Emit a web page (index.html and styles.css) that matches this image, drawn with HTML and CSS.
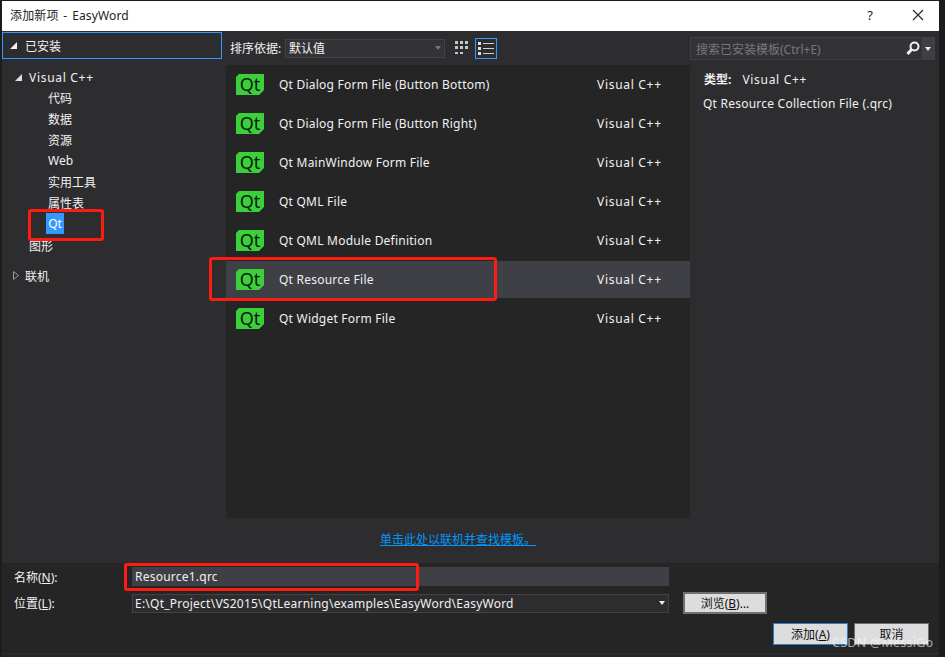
FILE: index.html
```html
<!DOCTYPE html>
<html lang="zh-CN">
<head>
    <meta charset="UTF-8">
    <title>添加新项 - EasyWord</title>
    <link rel="stylesheet" href="styles.css">
</head>
<body>

    <div class="dialog">
        <div class="titlebar">
            <span class="title">添加新项 - EasyWord</span>
            <span class="help">?</span>
            <svg class="close" width="12" height="12" viewBox="0 0 12 12"><path d="M1 1L11 11M11 1L1 11" stroke="#222" stroke-width="1.1" fill="none"/></svg>
        </div>

        <div class="main">
            <div class="sidebar">
                <div class="installed">
                    <svg class="arrow" width="7" height="7" viewBox="0 0 7 7"><polygon points="7,0 7,7 0,7" fill="#f1f1f1"/></svg>
                    <span>已安装</span>
                </div>
                <ul class="tree">
                    <li class="root">
                        <svg class="arrow" width="7" height="7" viewBox="0 0 7 7"><polygon points="7,0 7,7 0,7" fill="#e0e0e0"/></svg>
                        <span class="wide">Visual C++</span>
                    </li>
                    <li class="leaf">代码</li>
                    <li class="leaf">数据</li>
                    <li class="leaf">资源</li>
                    <li class="leaf">Web</li>
                    <li class="leaf">实用工具</li>
                    <li class="leaf">属性表</li>
                    <li class="leaf"><span class="picked">Qt</span></li>
                    <li class="branch">图形</li>
                    <li class="online">
                        <svg class="arrow" width="6" height="9" viewBox="0 0 6 9"><polygon points="0.5,0.5 5.5,4.5 0.5,8.5" fill="none" stroke="#9a9a9a"/></svg>
                        <span>联机</span>
                    </li>
                </ul>
            </div>

            <div class="center">
                <div class="toolbar">
                    <span class="sort-label">排序依据:</span>
                    <div class="sort-select">
                        <span>默认值</span>
                        <i class="caret dim"></i>
                    </div>
                    <svg class="view-grid" width="13" height="14" viewBox="0 0 13 14">
                        <path d="M0 0h3v3H0zM5 0h3v3H5zM10 0h3v3h-3zM0 5h3v3H0zM5 5h3v3H5zM10 5h3v3h-3zM0 11h3v2H0zM5 11h3v2H5z" fill="#c8c8c8"/>
                    </svg>
                    <div class="view-list">
                        <svg width="16" height="13" viewBox="0 0 16 13">
                            <path d="M0 0h3v3H0zM0 5h3v3H0zM0 10h3v3H0z" fill="#e0e0e0"/>
                            <path d="M5 1.5h11M5 6.5h11M5 11.5h11" stroke="#d0d0d0" fill="none"/>
                        </svg>
                    </div>
                </div>

                <div class="list">
                    <div class="row"><span class="qt">Qt</span><span class="name">Qt Dialog Form File (Button Bottom)</span><span class="lang">Visual C++</span></div>
                    <div class="row"><span class="qt">Qt</span><span class="name">Qt Dialog Form File (Button Right)</span><span class="lang">Visual C++</span></div>
                    <div class="row"><span class="qt">Qt</span><span class="name">Qt MainWindow Form File</span><span class="lang">Visual C++</span></div>
                    <div class="row"><span class="qt">Qt</span><span class="name">Qt QML File</span><span class="lang">Visual C++</span></div>
                    <div class="row"><span class="qt">Qt</span><span class="name">Qt QML Module Definition</span><span class="lang">Visual C++</span></div>
                    <div class="row selected"><span class="qt">Qt</span><span class="name">Qt Resource File</span><span class="lang">Visual C++</span></div>
                    <div class="row"><span class="qt">Qt</span><span class="name">Qt Widget Form File</span><span class="lang">Visual C++</span></div>
                </div>

                <div class="online-link"><a href="#">单击此处以联机并查找模板。</a></div>
            </div>

            <div class="details">
                <div class="search">
                    <span class="search-text">搜索已安装模板(Ctrl+E)</span>
                    <svg class="search-icon" width="14" height="15" viewBox="0 0 14 15">
                        <circle cx="8.5" cy="5.5" r="4" fill="none" stroke="#f1f1f1" stroke-width="2"/>
                        <path d="M5.5 8.5L1.5 13" stroke="#f1f1f1" stroke-width="3" fill="none"/>
                    </svg>
                    <div class="search-btn"><i class="caret"></i></div>
                </div>
                <div class="info-type"><b>类型:</b><span class="wide">Visual C++</span></div>
                <div class="info-desc">Qt Resource Collection File (.qrc)</div>
            </div>
        </div>

        <div class="footer">
            <div class="field name-field">
                <label>名称(<u>N</u>):</label>
                <div class="name-input">Resource1.qrc</div>
            </div>
            <div class="field path-field">
                <label>位置(<u>L</u>):</label>
                <div class="path-select">
                    <span>E:\Qt_Project\VS2015\QtLearning\examples\EasyWord\EasyWord</span>
                    <i class="caret"></i>
                </div>
                <button class="btn browse">浏览(<u>B</u>)...</button>
            </div>
            <div class="actions">
                <button class="btn primary">添加(<u>A</u>)</button>
                <button class="btn">取消</button>
            </div>
        </div>
    </div>

    <!-- 红框标注 -->
    <div class="mark mark-qt"></div>
    <div class="mark mark-row"></div>
    <div class="mark mark-name"></div>
    <div class="watermark">CSDN @MessiGo</div>

</body>
</html>
```

FILE: styles.css
```css
* {
    box-sizing: border-box;
}
html, body {
    height: 100%;
}
body {
    margin: 0;
    background-color: #1c1c1c;
    font-family: "Noto Sans", "Noto Sans CJK SC", sans-serif;
    font-size: 12px;
    color: #f1f1f1;
    overflow: hidden;
    position: relative;
}
.dialog {
    width: 937px;
    height: 656px;
    margin: 1px 0 0 2px;
    display: flex;
    flex-direction: column;
    background-color: #2d2d30;
}
.titlebar {
    height: 30px;
    flex: none;
    background-color: #fff;
    color: #222;
    display: flex;
    align-items: center;
    padding: 0 0 2px 8px;
}
.title {
    flex: 1;
    font-size: 12px;
    letter-spacing: 0.15px;
    word-spacing: 1.5px;
}
.help {
    margin-right: 39px;
    font-size: 13px;
}
.close {
    margin-right: 15px;
}
.main {
    flex: 1;
    min-height: 0;
    display: flex;
}
.sidebar {
    width: 224px;
    flex: none;
}
.installed {
    width: 220px;
    height: 27px;
    margin-top: 1px;
    border: 1px solid #3399ff;
    display: flex;
    align-items: center;
    padding-left: 7px;
    gap: 8px;
}
.tree {
    list-style: none;
    margin: 8px 0 0;
    padding: 0;
}
.tree li {
    height: 21px;
    display: flex;
    align-items: center;
}
.tree .root {
    height: 20px;
    padding-left: 13px;
    gap: 7px;
}
.leaf {
    padding-left: 46px;
}
.branch {
    margin-top: 1px;
    padding-left: 27px;
}
.tree .online {
    margin-top: 9px;
    padding-left: 11px;
    gap: 6px;
}
.picked {
    background-color: #3399ff;
    color: #fff;
    height: 21px;
    line-height: 21px;
    width: 18px;
    margin-left: -2px;
    text-align: center;
}
.center {
    width: 464px;
    flex: none;
    display: flex;
    flex-direction: column;
}
.toolbar {
    height: 34px;
    flex: none;
    display: flex;
    align-items: center;
    padding-left: 4px;
}
.sort-label {
    width: 55px;
}
.sort-select {
    width: 160px;
    height: 19px;
    background-color: #333337;
    border: 1px solid #434346;
    display: flex;
    align-items: center;
    justify-content: space-between;
    padding: 0 3px;
}
.caret {
    width: 0;
    height: 0;
    border-left: 3.5px solid transparent;
    border-right: 3.5px solid transparent;
    border-top: 4px solid #f1f1f1;
}
.caret.dim {
    border-top-color: #77777a;
}
.view-grid {
    margin-left: 10px;
}
.view-list {
    width: 22px;
    height: 21px;
    margin-left: 7px;
    border: 1px solid #3399ff;
    display: flex;
    align-items: center;
    justify-content: center;
}
.list {
    height: 453px;
    flex: none;
    background-color: #252526;
    padding-top: 1px;
    display: flex;
    flex-direction: column;
    gap: 2px;
}
.row {
    height: 37px;
    flex: none;
    display: flex;
    align-items: center;
    padding-left: 10px;
}
.row.selected {
    background-color: #3f3f46;
}
.qt {
    width: 28px;
    height: 21px;
    background-color: #3ccf3c;
    color: #06210a;
    font-size: 18px;
    line-height: 20px;
    text-align: center;
    clip-path: polygon(3px 0, 100% 0, 100% 16px, 23px 100%, 0 100%, 0 3px);
}
.name {
    width: 318px;
    margin-left: 15px;
    letter-spacing: 0.23px;
}
.lang, .wide {
    letter-spacing: 0.7px;
}
.online-link {
    flex: 1;
    text-align: center;
    padding-top: 12px;
}
.online-link a {
    color: #0097fb;
}
.details {
    flex: 1;
    min-width: 0;
}
.search {
    width: 245px;
    height: 23px;
    margin: 6px 0 0 0;
    background-color: #333337;
    border: 1px solid #3f3f46;
    display: flex;
    align-items: center;
    padding-left: 5px;
}
.search-text {
    flex: 1;
    color: #77777a;
}
.search-icon {
    margin-right: 2px;
}
.search-btn {
    width: 12px;
    height: 21px;
    background-color: #3f3f46;
    display: flex;
    align-items: center;
    justify-content: center;
}
.info-type {
    margin: 9px 0 0 14px;
    display: flex;
    gap: 11px;
    height: 20px;
    align-items: center;
}
.info-desc {
    margin: 6px 0 0 13px;
    letter-spacing: 0.23px;
}
.footer {
    height: 94px;
    flex: none;
    background-color: #252526;
    position: relative;
    padding-top: 4px;
}
.footer::after {
    content: "";
    position: absolute;
    left: 0;
    right: 0;
    bottom: 3px;
    border-bottom: 1px dotted #3a3a3c;
}
.field {
    display: flex;
    align-items: center;
    padding-left: 12px;
}
.field label {
    width: 118px;
}
.name-field {
    height: 19px;
}
.path-field {
    height: 22px;
    margin-top: 6px;
}
.name-input {
    width: 537px;
    height: 19px;
    line-height: 19px;
    background-color: #3f3f46;
    padding-left: 3px;
    letter-spacing: 0.23px;
}
.path-select {
    width: 537px;
    height: 19px;
    background-color: #2d2d30;
    border: 1px solid #434346;
    display: flex;
    align-items: center;
    justify-content: space-between;
    padding: 0 3px 0 2px;
    letter-spacing: 0.24px;
}
.btn {
    width: 75px;
    height: 22px;
    padding: 0;
    background-color: #dddddd;
    border: 1px solid #707070;
    color: #111;
    font-family: inherit;
    font-size: 12px;
}
.browse {
    width: 84px;
    margin-left: 14px;
    border-width: 2px;
}
.actions {
    display: flex;
    justify-content: flex-end;
    gap: 6px;
    margin-top: 9px;
    padding-right: 10px;
}
.primary {
    border-color: #2a7fc8;
}
.mark {
    position: absolute;
    border: 3px solid #fd1c12;
    border-radius: 3px;
}
.mark-qt {
    left: 28px;
    top: 209px;
    width: 76px;
    height: 32px;
}
.mark-row {
    left: 209px;
    top: 257px;
    width: 288px;
    height: 44px;
}
.mark-name {
    left: 124px;
    top: 563px;
    width: 295px;
    height: 28px;
}
.watermark {
    position: absolute;
    left: 832px;
    top: 634px;
    color: rgba(255, 255, 255, 0.6);
    font-size: 12.5px;
    letter-spacing: 0.25px;
}
```
